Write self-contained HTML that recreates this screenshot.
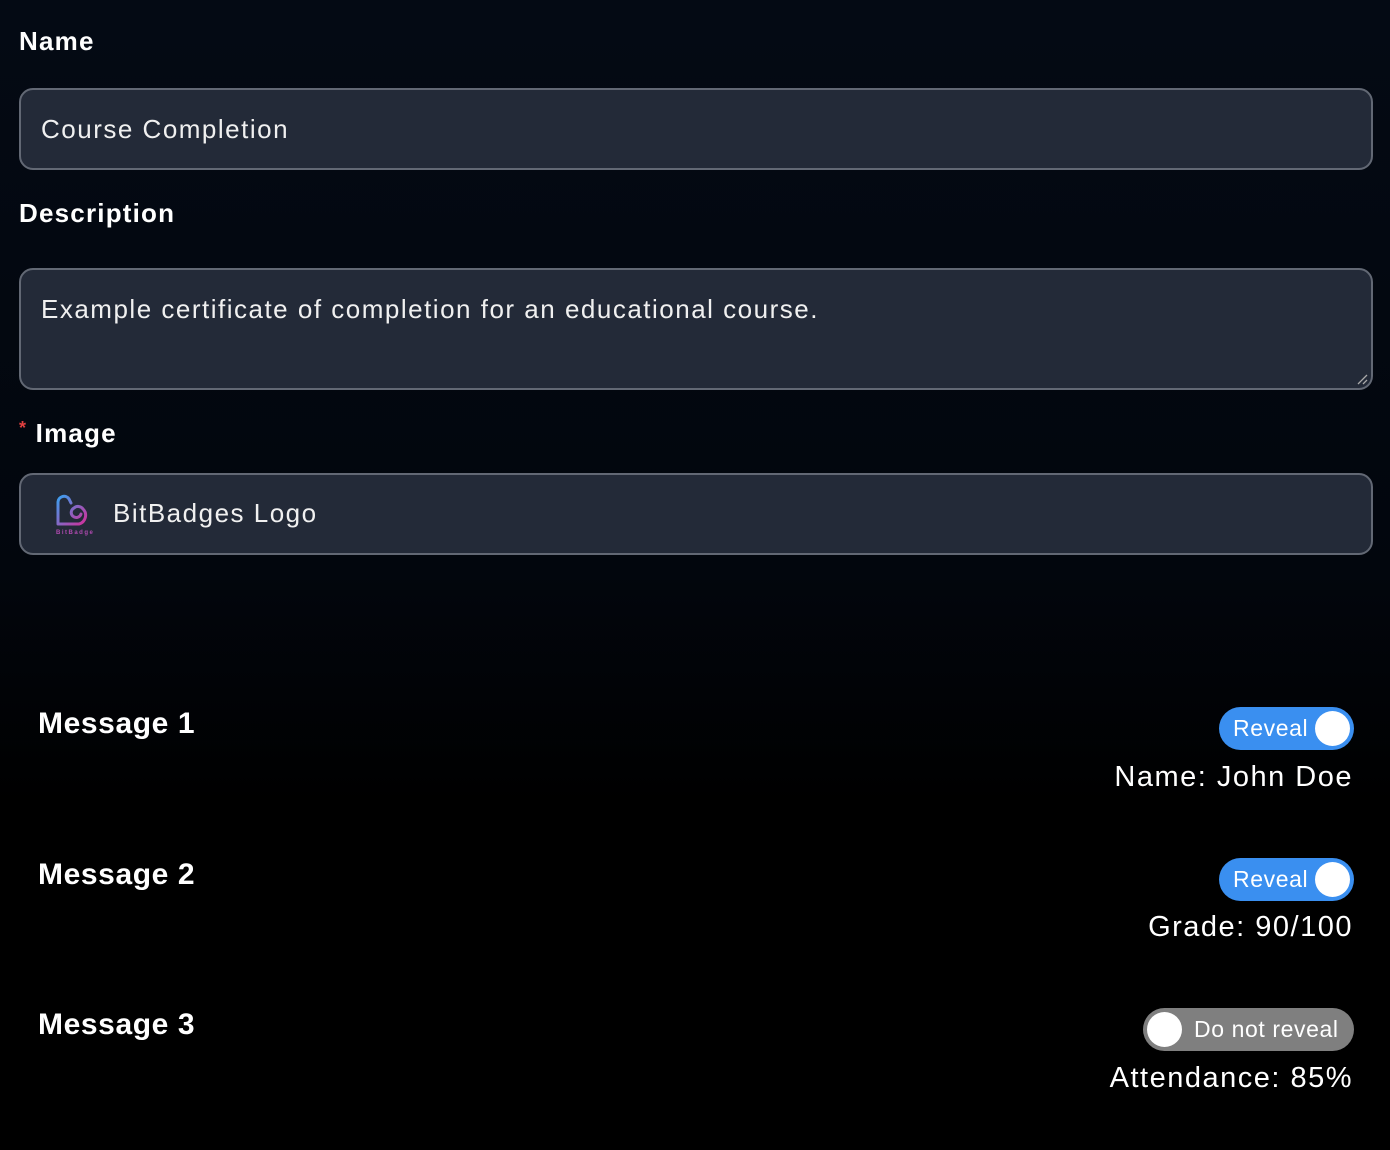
<!DOCTYPE html>
<html><head><style>
*{box-sizing:border-box;margin:0;padding:0}
body{width:1390px;height:1150px;background:linear-gradient(#040a14 0%,#02060d 50%,#000 70%);font-family:"Liberation Sans",sans-serif;color:#fff;position:relative;overflow:hidden}
.lbl{position:absolute;left:19px;font-weight:bold;font-size:26px;letter-spacing:1.2px}
.box{position:absolute;left:19px;width:1354px;background:#232a38;border:2px solid #626874;border-radius:14px;font-size:26px;color:#f0f0f0;letter-spacing:1.5px}
.msg{position:absolute;left:38px;font-weight:bold;font-size:30px;letter-spacing:0.6px}
.tog{position:absolute;height:43px;border-radius:22px;font-size:23px;line-height:43px;letter-spacing:0.6px}
.knob{position:absolute;top:4px;width:35px;height:35px;border-radius:50%;background:#fff}
.val{position:absolute;right:37px;font-size:29px;letter-spacing:1.5px}
</style></head><body>
<div class="lbl" style="top:26px">Name</div>
<div class="box" style="top:88px;height:82px;padding:24px 20px">Course Completion</div>
<div class="lbl" style="top:198px">Description</div>
<div class="box" style="top:268px;height:122px;padding:24px 20px">Example certificate of completion for an educational course.
<svg style="position:absolute;right:3px;bottom:3px" width="12" height="12"><path d="M2 11L11 2M7 11L11 7" stroke="#aaa" stroke-width="1.3"/></svg></div>
<div class="lbl" style="top:418px"><span style="color:#e04040;font-size:18px;vertical-align:top">*</span> Image</div>
<div class="box" style="top:473px;height:82px;padding:23px 0 0 92px">BitBadges Logo
<svg style="position:absolute;left:32px;top:18px" width="40" height="44" viewBox="0 0 40 44"><defs><linearGradient id="g" x1="0" y1="0" x2="1" y2="1"><stop offset="0" stop-color="#3aa0f0"/><stop offset="1" stop-color="#d02f9a"/></linearGradient></defs><path d="M5 31V9a6 6 0 0 1 11-3l2 4 M5 31H26a9 9 0 0 0 4-15 a6 6 0 0 0-9-1 a5 5 0 1 0 7 6" fill="none" stroke="url(#g)" stroke-width="3" stroke-linecap="round"/><text x="3" y="41" font-size="6" font-weight="bold" fill="#b04ab0" font-family="Liberation Sans">BitBadges</text></svg></div>
<div class="msg" style="top:707px">Message 1</div>
<div class="tog" style="top:707px;left:1219px;width:135px;background:#3a8ff0;padding-left:14px">Reveal<div class="knob" style="right:4px"></div></div>
<div class="val" style="top:761px">Name: John Doe</div>
<div class="msg" style="top:858px">Message 2</div>
<div class="tog" style="top:858px;left:1219px;width:135px;background:#3a8ff0;padding-left:14px">Reveal<div class="knob" style="right:4px"></div></div>
<div class="val" style="top:911px">Grade: 90/100</div>
<div class="msg" style="top:1008px">Message 3</div>
<div class="tog" style="top:1008px;left:1143px;width:211px;background:#7f7f7f;padding-left:51px">Do not reveal<div class="knob" style="left:4px"></div></div>
<div class="val" style="top:1062px">Attendance: 85%</div>
</body></html>
